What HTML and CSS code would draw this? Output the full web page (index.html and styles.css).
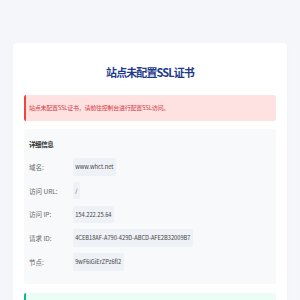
FILE: index.html
```html
<!DOCTYPE html>
<html lang="zh-CN">
<head>
<meta charset="utf-8">
<title>站点未配置SSL证书</title>
<link rel="stylesheet" href="styles.css">
</head>
<body>
<div class="card">
  <h1 class="title">站点未配置SSL证书</h1>
  <div class="alert">站点未配置SSL证书，请前往控制台进行配置SSL访问。</div>
  <div class="details">
    <div class="details-title">详细信息</div>
    <div class="rows">
      <div class="label">域名:</div><div class="cell"><span class="value">www.whct.net</span></div>
      <div class="label">访问 URL:</div><div class="cell"><span class="value">/</span></div>
      <div class="label">访问 IP:</div><div class="cell"><span class="value">154.222.25.64</span></div>
      <div class="label">请求 ID:</div><div class="cell"><span class="value">4CEB18AF-A790-429D-ABCD-AFE2B32009B7</span></div>
      <div class="label">节点:</div><div class="cell"><span class="value">9wF6lGiErZPz6fl2</span></div>
    </div>
  </div>
  <div class="notice"></div>
</div>
</body>
</html>
```
FILE: styles.css
```css
html, body {
  margin: 0;
  padding: 0;
  background: #f5f6fa;
  font-family: "Noto Sans CJK SC", "Noto Sans", sans-serif;
  overflow: hidden;
}
.card {
  margin: 43px 13px 0 13px;
  background: #ffffff;
  border-radius: 4px;
  padding: 21px 11px 20px 11px;
  box-shadow: 0 1px 3px rgba(0, 0, 0, 0.03);
}
.title {
  margin: 0;
  text-align: center;
  font-size: 11px;
  line-height: 16px;
  font-weight: 700;
  letter-spacing: -0.9px;
  color: #1e3a8a;
}
.alert {
  margin-top: 15px;
  background: #fee2e2;
  border-left: 2px solid #ef4444;
  border-radius: 2px;
  padding: 9px 0 9px 3px;
  font-size: 6px;
  line-height: 8px;
  letter-spacing: -0.25px;
  color: #d3383f;
}
.details {
  margin-top: 8px;
  background: #f8f9fb;
  border-radius: 3px;
  padding: 10px 5px 13px 5px;
}
.details-title {
  font-size: 6.5px;
  line-height: 10px;
  font-weight: 700;
  letter-spacing: -0.4px;
  color: #333;
}
.rows {
  margin-top: 9px;
  display: grid;
  grid-template-columns: 43.7px 1fr;
  row-gap: 6.3px;
  align-items: center;
}
.label {
  font-size: 6.5px;
  line-height: 10px;
  color: #666;
}
.cell {
  display: flex;
}
.value {
  display: block;
  height: 17.5px;
  line-height: 17.5px;
  padding: 0 2.5px;
  background: #eef1f6;
  border-radius: 2px;
  font-size: 5.7px;
  color: #444;
}
.notice {
  margin-top: 9px;
  height: 30px;
  background: #ecfdf5;
  border-left: 2px solid #10b981;
  border-radius: 2px;
}
```
